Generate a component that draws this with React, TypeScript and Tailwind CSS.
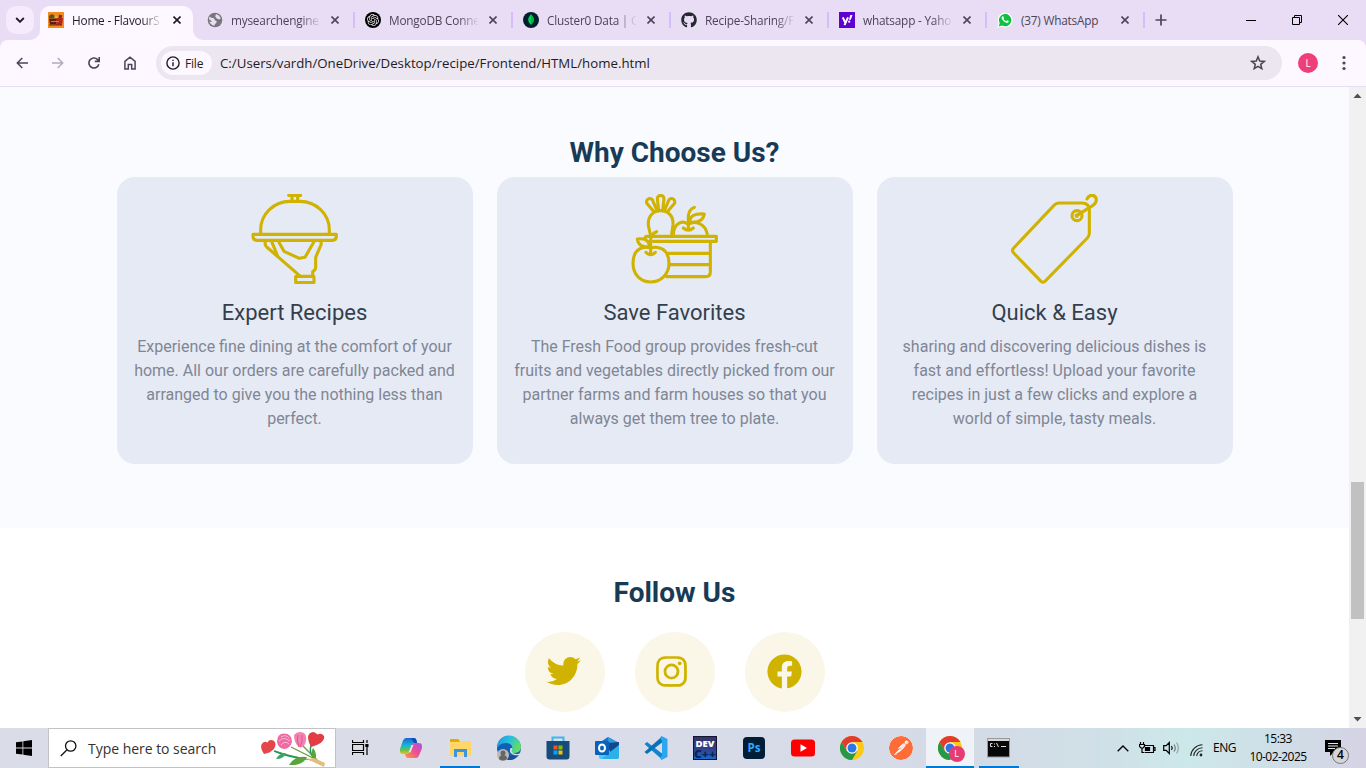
import React from "react";
import { FaGithub } from "react-icons/fa";
import { SiOpenai, SiPostman } from "react-icons/si";
import { BiLogoTwitter, BiLogoInstagram, BiLogoFacebookCircle } from "react-icons/bi";

const ui = "font-['Open_Sans','Noto_Sans',sans-serif]";

function FoodFavicon() {
  return (
    <svg width="16" height="16" viewBox="0 0 16 16">
      <rect width="16" height="16" fill="#f58a1f" />
      <path d="M1 4q2-3 5-1l1 3H1z" fill="#4c5a1c" />
      <path d="M1 6.500h8l-1 6H2z" fill="#5a1e12" />
      <path d="M9 6h6l-1 7H8z" fill="#b3261e" />
      <path d="M11 2.500l3.500 1-1 2.500h-3z" fill="#7a2d18" />
      <path d="M3 9h8v1H3z" fill="#e8703a" />
      <path d="M6.500 4.500h3V6h-3z" fill="#e8c13a" />
      <path d="M1 12.500h13v1H1z" fill="#6b2a12" />
    </svg>
  );
}

function GlobeFavicon() {
  return (
    <svg width="16" height="16" viewBox="0 0 16 16">
      <circle cx="8" cy="8" r="7.300" fill="#77777b" />
      <path d="M2.500 4.600C4 6.500 7 5.500 7.500 7.500c.3 1.500 2.500 1 2.200 2.600-.2 1.200-2 1.400-2.200 3.600-2.500-.2-4.500-2-5.200-4.200L5 10 3.500 8 2 7.500zM9 2l3 1.500 1.800 2.700-1.600 1.300-2.400-1-1.600-2z" fill="#e9ddf5" />
    </svg>
  );
}

function OpenAiFavicon() {
  return (
    <div className="flex h-4 w-4 items-center justify-center rounded-full bg-black">
      <SiOpenai size={12} color="#e8e8e8" />
    </div>
  );
}

function MongoFavicon() {
  return (
    <svg width="16" height="16" viewBox="0 0 16 16">
      <circle cx="8" cy="8" r="8" fill="#001e2b" />
      <path d="M8 2.300C6.500 4 5.100 5.800 5.200 8c.1 2 1.200 3.300 2.500 4.300L8 14l.3-1.700C9.700 11.300 10.800 10 10.900 8 11 5.800 9.500 4 8 2.300z" fill="#00d65b" />
      <path d="M8 2.300V14l.3-1.700C9.700 11.300 10.800 10 10.900 8 11 5.800 9.500 4 8 2.300z" fill="#00b545" />
    </svg>
  );
}

function YahooFavicon() {
  return (
    <svg width="16" height="16" viewBox="0 0 16 16">
      <rect width="16" height="16" fill="#5f01d1" />
      <path d="M3.800 5.400l2.300 5M9 5.400L5.500 13.200" stroke="#fff" strokeWidth="2" fill="none" />
      <path d="M11.300 3h2.200l-1.700 4.800H9.900z" fill="#fff" />
      <circle cx="10.200" cy="9.700" r="1.100" fill="#fff" />
    </svg>
  );
}

function WhatsAppFavicon() {
  return (
    <svg width="16" height="16" viewBox="0 0 16 16">
      <path d="M.4 15.700l1.100-4.400A7.400 7.400 0 1 1 4.700 14.600z" fill="#fff" />
      <path d="M1.800 14.400l.9-3.300a6.200 6.200 0 1 1 2.400 2.400z" fill="#0fc143" />
      <path d="M5.500 4.300c.6-.3 1 0 1.600 1.700-.2.600-.8.700-.4 1.200.6 1 1.400 1.600 2.300 1.900.4 0 .7-1 1.100-.9l1.600.8c.2.900-.6 1.800-1.700 1.900C7.500 10.700 4.900 8 4.600 6.100c0-.8.500-1.600.9-1.800z" fill="#fff" />
    </svg>
  );
}

const tabs = [
  { title: "mysearchengine.", icon: <GlobeFavicon />, fade: true },
  { title: "MongoDB Conne", icon: <OpenAiFavicon />, fade: true },
  { title: "Cluster0 Data | C", icon: <MongoFavicon />, fade: true },
  { title: "Recipe-Sharing/F", icon: <FaGithub size={16} color="#24292f" />, fade: true },
  { title: "whatsapp - Yaho", icon: <YahooFavicon />, fade: true },
  { title: "(37) WhatsApp", icon: <WhatsAppFavicon />, fade: false },
];

const fadeMask = "[mask-image:linear-gradient(to_right,black_70px,transparent_90px)]";

function Cross({ color }: { color: string }) {
  return (
    <svg width="8" height="8" viewBox="0 0 8 8" className="shrink-0">
      <path d="M.5.5l7 7M7.500.5l-7 7" stroke={color} strokeWidth="1.600" />
    </svg>
  );
}

function TabStrip() {
  return (
    <div className="flex h-10 items-stretch bg-[#e9ddf5]">
      <div className="flex w-10 items-start pl-1.5 pt-1.5">
        <div className="flex h-7 w-7 items-center justify-center rounded-[10px] bg-[#f6ebfd]">
          <svg width="10" height="6" viewBox="0 0 10 6"><path d="M1.200 1L5 4.800 8.800 1" fill="none" stroke="#1f1b24" strokeWidth="1.900" /></svg>
        </div>
      </div>
      <div className="relative mt-1.5 flex w-[153px] items-center rounded-t-[10px] bg-[#fdf7ff] pb-1.5 pl-2">
        <svg width="10" height="10" className="absolute -left-2.5 bottom-0"><path d="M10 0v10H0A10 10 0 0 0 10 0z" fill="#fdf7ff" /></svg>
        <svg width="10" height="10" className="absolute -right-2.5 bottom-0"><path d="M0 0v10h10A10 10 0 0 1 0 0z" fill="#fdf7ff" /></svg>
        <FoodFavicon />
        <div className={`ml-2 w-[89px] whitespace-nowrap pt-0.5 text-[11.8px] tracking-[-0.2px] text-[#1f1b24] ${fadeMask}`}>Home - FlavourS</div>
        <div className="ml-3"><Cross color="#1f1b24" /></div>
      </div>
      <div className="flex pl-[14px]">
        {tabs.map((t) => (
          <div key={t.title} className="flex w-[158px] items-center">
            {t.icon}
            <div className={`ml-2 w-[90px] whitespace-nowrap pt-0.5 text-[11.8px] tracking-[-0.2px] text-[#4b4556] ${t.fade ? fadeMask : ""}`}>{t.title}</div>
            <div className="ml-2.5"><Cross color="#4b4556" /></div>
            <div className="ml-[14px] h-4 w-0.5 bg-[#d3bdfb]" />
          </div>
        ))}
      </div>
      <svg width="12" height="12" className="my-auto"><path d="M6 .5v11M.5 6h11" stroke="#4b4556" strokeWidth="1.700" /></svg>
      <div className="ml-auto flex items-center gap-9 pr-[18px]">
        <svg width="10" height="10"><path d="M0 5.500h10" stroke="#000" /></svg>
        <svg width="10" height="10" fill="none" stroke="#000"><path d="M.5 2.500h7v7h-7zM2.500 2.500v-2h7v7h-2" /></svg>
        <svg width="10" height="10"><path d="M0 0l10 10M10 0L0 10" stroke="#000" strokeWidth="1.100" /></svg>
      </div>
    </div>
  );
}

function Toolbar() {
  return (
    <div className="bg-[#e9ddf5]">
      <div className="flex h-[47px] items-center rounded-t-[8px] border-b border-[#e8def0] bg-[#fdf7ff] pl-4">
        <div className="flex w-[122px] items-center gap-6">
          <svg width="12" height="12" fill="none" stroke="#4b4556" strokeWidth="1.500"><path d="M12 6H1.500M6.300 1L1.300 6l5 5" /></svg>
          <svg width="12" height="12" fill="none" stroke="#b2abba" strokeWidth="1.500"><path d="M0 6h10.500M5.700 1l5 5-5 5" /></svg>
          <svg width="12" height="12" fill="none" stroke="#4b4556" strokeWidth="1.600"><path d="M10.800 7.200A5 5 0 1 1 9.600 2.600L11 4M11.200 0v4.400H6.800" /></svg>
          <svg width="12" height="14" fill="none" stroke="#4b4556" strokeWidth="1.500"><path d="M.9 5.400L6 1.200l5.100 4.200V13H7.700V8.500H4.300V13H.9z" /></svg>
        </div>
        <div className="ml-[18px] flex h-[34px] w-[1126px] items-center rounded-full bg-[#ece6f0] pl-[5px]">
          <div className="flex h-6 w-[51px] items-center rounded-full bg-[#fdf7ff] pl-[5px]">
            <svg width="14" height="14" fill="none" stroke="#1f1b24" strokeWidth="1.400"><circle cx="7" cy="7" r="6.100" /><path d="M7 6.200v4M7 3.700v1.400" /></svg>
            <span className="ml-[5px] pt-px text-[12px] font-medium tracking-[-0.2px] text-[#1f1b24]">File</span>
          </div>
          <span className="ml-2 whitespace-nowrap pt-0.5 text-[13.27px] text-[#1f1b24]">C:/Users/vardh/OneDrive/Desktop/recipe/Frontend/HTML/home.html</span>
          <svg width="16" height="16" viewBox="0 0 16 16" className="ml-auto mr-4"><path d="M8 1.800l1.700 4.300 4.500.3-3.500 2.900 1.100 4.400L8 11.300l-3.800 2.400 1.100-4.400-3.500-2.900 4.500-.3z" fill="none" stroke="#4b4556" strokeWidth="1.500" /></svg>
        </div>
        <div className="ml-4 flex h-5 w-5 items-center justify-center rounded-full bg-[#ee3f78] text-[10px] text-white">L</div>
        <svg width="4" height="16" className="ml-6" fill="#4b4556"><circle cx="2" cy="2.500" r="1.600" /><circle cx="2" cy="8" r="1.600" /><circle cx="2" cy="13.500" r="1.600" /></svg>
      </div>
    </div>
  );
}

function LineArt({ children }: { children: React.ReactNode }) {
  return (
    <svg width="90" height="90" viewBox="60 42 270 270" fill="none" stroke="#d0b200" strokeWidth="9.300" strokeLinecap="round" strokeLinejoin="round">{children}</svg>
  );
}

const ServingTray = (
  <LineArt>
    <path d="M176 46H212M186 50v12M203 50v12" />
    <path d="M92 160V150C92 102 132 64 180 64h30C258 64 298 102 298 150V160" />
    <path d="M69 163H319v6q0 12-12 12H81q-12 0-12-12z" />
    <path d="M106 187c-2 6 0 10 4 14L208 286" />
    <path d="M126 187L143 228M147 187L162 214 208 235 225 232 251 187" />
    <path d="M273 187q2 6-2 12L257 232v31q-1 8-9 12v11" />
    <rect x="197" y="289" width="55" height="19" rx="1" />
  </LineArt>
);

const FruitCrate = (
  <LineArt>
    <path d="M146 92L142 56a10 10 0 0 1 20 0L158 92M132 95L112 72a9 9 0 0 1 15-13L141 92M172 95L192 72a9 9 0 0 0-15-13L163 92" />
    <path d="M121 163L115 136C113 108 130 92 152 92S191 108 189 134L185 162" />
    <path d="M190 163C192 126 220 120 235 133 254 120 286 130 292 163" />
    <path d="M220 144q15 13 30 0M235 150V108q2-20 18-26M239 126C240 108 252 100 283 102 280 122 265 129 239 126z" />
    <path d="M122 169H319v15H130M118 169h-7q-6 0-6 7" />
    <path d="M301 187V276q0 14-14 14H170M174 220H299M180 254H299" />
    <path d="M122 204C104 198 69 202 69 250 69 284 92 306 122 306S177 284 177 250C177 202 140 198 122 204z" />
    <path d="M108 217q14 14 28 0M122 222V178q2-18 18-23M116 201C96 202 84 196 82 177 106 174 117 182 118 196" />
  </LineArt>
);

const PriceTag = (
  <LineArt>
    <path d="M207 69H276Q298 69 298 92V160Q298 168 292 174L167 302Q159 311 151 302L71 219Q64 212 71 204L192 76Q198 69 207 69z" />
    <circle cx="261" cy="107" r="15" />
    <path d="M261 106L309 76C324 66 321 46 305 46q-10 0-14 11" />
    <circle cx="260" cy="107" r="2" />
  </LineArt>
);

const features = [
  { title: "Expert Recipes", icon: ServingTray, lines: ["Experience fine dining at the comfort of your", "home. All our orders are carefully packed and", "arranged to give you the nothing less than", "perfect."] },
  { title: "Save Favorites", icon: FruitCrate, lines: ["The Fresh Food group provides fresh-cut", "fruits and vegetables directly picked from our", "partner farms and farm houses so that you", "always get them tree to plate."] },
  { title: "Quick & Easy", icon: PriceTag, lines: ["sharing and discovering delicious dishes is", "fast and effortless! Upload your favorite", "recipes in just a few clicks and explore a", "world of simple, tasty meals."] },
];

const socials = [
  { name: "twitter", icon: <BiLogoTwitter size={42} />, pad: "pr-0.5 pb-0.5" },
  { name: "instagram", icon: <BiLogoInstagram size={41} />, pad: "pr-1.5 pb-0.5" },
  { name: "facebook", icon: <BiLogoFacebookCircle size={41} />, pad: "pr-px pb-px" },
];

function Page() {
  return (
    <main className="flex-1 overflow-hidden bg-white font-[Roboto,sans-serif]">
      <section className="h-[441px] bg-[#fafbff] pt-[46px]">
        <h2 className="text-center text-[28px] font-bold leading-10 text-[#173b56]">Why Choose Us?</h2>
        <div className="ml-[117px] mt-1 flex gap-6">
          {features.map((f) => (
            <div key={f.title} className="flex h-[287px] w-[356px] flex-col items-center rounded-[18px] bg-[#e6eaf5] pt-[17px]">
              {f.icon}
              <h3 className="mt-[13px] pr-px text-[22px] leading-8 text-[#343f4b]">{f.title}</h3>
              <div className="mt-1.5 pr-px text-center text-base leading-6 text-[#7f8694]">
                {f.lines.map((l) => <div key={l} className="whitespace-nowrap">{l}</div>)}
              </div>
            </div>
          ))}
        </div>
      </section>
      <section className="pt-[45px]">
        <h2 className="text-center text-[28px] font-bold leading-10 text-[#173b56]">Follow Us</h2>
        <div className="mt-[19px] flex justify-center gap-[30px]">
          {socials.map((s) => (
            <div key={s.name} className={`flex h-20 w-20 items-center justify-center rounded-full bg-[#faf7e8] text-[#d0b200] ${s.pad}`}>{s.icon}</div>
          ))}
        </div>
      </section>
    </main>
  );
}

function Scrollbar() {
  return (
    <div className="flex w-[17px] flex-col items-center bg-[#f1f1f1]">
      <svg width="17" height="17"><path d="M4.500 11L8.500 6.500l4 4.500z" fill="#505050" /></svg>
      <div className="mt-[378px] h-[137px] w-[13px] bg-[#c1c1c1]" />
      <svg width="17" height="17" className="mt-auto"><path d="M4.500 6L8.500 10.500l4-4.500z" fill="#505050" /></svg>
    </div>
  );
}

function Bouquet() {
  return (
    <svg width="66" height="36" viewBox="0 0 66 36" fill="none">
      <path d="M14 20q20 7 44 10M30 16l28 14M40 13l16 16" stroke="#6a9a32" strokeWidth="1.300" />
      <path d="M13 20q14 6 32 8" stroke="#169b62" strokeWidth="1.600" />
      <path d="M50 14q-2 8 2 12" stroke="#169b62" strokeWidth="1.400" />
      <path d="M15 28q3-6 10-6-2 6-10 6z" fill="#3aa760" />
      <path d="M28 34q6-10 18-8-4 9-18 8zM54 30q-6-6-2-13 5 5 2 13z" fill="#58a63a" />
      <path d="M46 28l7-1 11 5-1 4z" fill="#e3bd7d" />
      <path d="M3 23Q-1 18 .5 13.500q2-4 6-2Q8 8 12.500 9.500q4 3 0 9Q9 22 3 23z" fill="#e4474b" />
      <path d="M50 16Q45 7 48.500 2.500q4-3.500 8 1 4-2 6.500 1.500 2 7-13 11z" fill="#e23d45" />
      <path d="M16 11q0-8.500 7-8.500 8 0 8 8.500-2 7-8 7-6-1-7-7z" fill="#ee6ca3" />
      <path d="M20 6q5-3 8 1M18 10q5-5 11 0M20 14q4-5 8-1" stroke="#ffb8d4" strokeWidth="1" />
      <path d="M33 4q4-5 10-2 3 2 2 8-2 8-7 6-5-4-5-12z" fill="#f283b0" />
      <path d="M37 4q-2 6 1 12M41 4q1 7-2 12" stroke="#e0508f" strokeWidth="1" />
    </svg>
  );
}

function Copilot() {
  return (
    <svg width="24" height="24" viewBox="0 0 24 24">
      <defs>
        <linearGradient id="cpA" x1="0" y1="0" x2="0" y2="1"><stop offset="0" stopColor="#1b62d8" /><stop offset=".45" stopColor="#18b4d8" /><stop offset=".75" stopColor="#62c152" /><stop offset="1" stopColor="#f4c20d" /></linearGradient>
        <linearGradient id="cpB" x1="1" y1="0" x2="0" y2="1"><stop offset="0" stopColor="#a852e8" /><stop offset=".5" stopColor="#ee4f8d" /><stop offset="1" stopColor="#ff9b3d" /></linearGradient>
      </defs>
      <path d="M7 2h8q2 0 2.700 3L18 7h-2q-2 0-3 3l-2 6q-.8 2-3 2H4c-3 0-3.500-3-2.700-6L4 4.500Q5 2 7 2z" fill="url(#cpA)" />
      <path d="M17 22H9q-2 0-2.500-2.500L6 18h2q2 0 3-3l2-6q.8-2 3-2h4c3 0 3.500 3 2.700 6L20 19.500q-1 2.500-3 2.500z" fill="url(#cpB)" />
      <path d="M12 2h3q2 0 2.700 3L18 7h-3z" fill="#1748b4" />
      <path d="M12.500 9h2l-3 7.500h-2z" fill="#e6e2ef" />
    </svg>
  );
}

function Folder() {
  return (
    <svg width="24" height="24" viewBox="0 0 24 24">
      <path d="M2 3h8l2 2h10v15H2z" fill="#e9a900" />
      <path d="M2 6h9l1-1h11v15H2z" fill="#ffd668" />
      <path d="M6 21v-8h13v8h-3v-5H9v5z" fill="#3d93dc" />
    </svg>
  );
}

function Edge() {
  return (
    <svg width="26" height="26" viewBox="0 0 26 26">
      <defs>
        <linearGradient id="edA" x1="0" y1="0" x2="1" y2=".4"><stop offset="0" stopColor="#1c91d9" /><stop offset=".5" stopColor="#24bde0" /><stop offset="1" stopColor="#62dc68" /></linearGradient>
      </defs>
      <circle cx="13" cy="13" r="12" fill="#1260b5" />
      <path d="M1 13A12 12 0 0 1 25 12c0 5-4 6-8 6-2 0-3-2-1.500-3.500C18 11 14 8 10 8c-5 0-8 3-9 5z" fill="url(#edA)" />
      <path d="M10 13c-1 6 5 10 12.500 7-2 3-5 5-9.500 5-5-2-7-9-3-12z" fill="#164f9a" />
      <path d="M15 13c2 0 1 2 .5 3 0 2 4 4 8 2.500 1.500-.5 2 0 1 1-4 2-11 0-10.500-4 .3-1.500 0-2.500 1-2.500z" fill="#d9dce8" />
      <circle cx="7" cy="20" r="6" fill="#bab8b5" /><circle cx="7" cy="18" r="2.500" fill="#656565" /><path d="M3 24q0-4 4-4t4 4q-4 3-8 0z" fill="#656565" />
    </svg>
  );
}

function Store() {
  return (
    <svg width="24" height="26" viewBox="0 0 24 26">
      <path d="M6.500 8V2.500h11V8" fill="none" stroke="#39b9ee" strokeWidth="2" />
      <path d="M.5 6h23v15.500q0 3-3 3h-17q-3 0-3-3z" fill="#174b79" />
      <path d="M7.500 10.500h4v4h-4z" fill="#f35325" /><path d="M12.500 10.500h4v4h-4z" fill="#81bc06" /><path d="M7.500 15.500h4v4h-4z" fill="#05a6f0" /><path d="M12.500 15.500h4v4h-4z" fill="#ffba08" />
    </svg>
  );
}

function Outlook() {
  return (
    <svg width="26" height="26" viewBox="0 0 26 26">
      <path d="M5 8l9-6 11 6v6H5z" fill="#1473c8" />
      <path d="M14 2l11 6-12 8z" fill="#2f9be0" />
      <path d="M25 8v14q0 2-2 2H7q-2 0-2-2v-4z" fill="#4cc5ef" />
      <path d="M25 9L8 24h15q2 0 2-2z" fill="#2bb0e8" />
      <path d="M13 8l12-1v3l-9 7z" fill="#12498e" />
      <rect x="1" y="6" width="14" height="14" rx="1" fill="#0763b9" />
      <ellipse cx="8" cy="13" rx="3" ry="3.500" fill="none" stroke="#fff" strokeWidth="2" />
    </svg>
  );
}

function VsCode() {
  return (
    <svg width="26" height="26" viewBox="0 0 26 26">
      <path d="M1.500 9l2.500-2L19 18.500v6z" fill="#1183cc" />
      <path d="M1.500 17L4 19 19 7.500v-6z" fill="#0871b8" />
      <path d="M18.500 1l6 3v18l-6 3-1.500-2 2-3V6l-2-3z" fill="#2ba7ef" />
    </svg>
  );
}

function DevCpp() {
  return (
    <svg width="24" height="24" viewBox="0 0 24 24">
      <defs><linearGradient id="dvA" x1="0" y1="0" x2="0" y2="1"><stop offset="0" stopColor="#303466" /><stop offset=".5" stopColor="#343c87" /><stop offset="1" stopColor="#176bd0" /></linearGradient></defs>
      <rect x=".5" y=".5" width="23" height="23" fill="url(#dvA)" stroke="#14142c" />
      <text x="12" y="11" textAnchor="middle" fontSize="9.500" fontWeight="800" fill="#fff" fontFamily="Open Sans" textLength="19" lengthAdjust="spacingAndGlyphs">DEV</text>
      <text x="12" y="22" textAnchor="middle" fontSize="11" fontWeight="800" fill="#0a2450" fontFamily="Open Sans" textLength="22" lengthAdjust="spacingAndGlyphs">C++</text>
    </svg>
  );
}

function Photoshop() {
  return (
    <svg width="22" height="22" viewBox="0 0 22 22">
      <rect width="22" height="22" rx="4" fill="#001e36" />
      <text x="11" y="15" textAnchor="middle" fontSize="12" fontWeight="700" fill="#31a8ff" fontFamily="Open Sans" textLength="13" lengthAdjust="spacingAndGlyphs">Ps</text>
    </svg>
  );
}

function YouTube() {
  return <svg width="24" height="18" viewBox="0 0 24 18"><rect y=".5" width="24" height="17" rx="3.500" fill="#f00" /><path d="M9.500 5.300v7.400L16 9z" fill="#fff" /></svg>;
}

function Chrome() {
  return (
    <svg width="24" height="24" viewBox="0 0 24 24">
      <circle cx="12" cy="12" r="12" fill="#fbc916" />
      <path d="M1.600 6A12 12 0 0 1 22.400 6H12L6.800 15z" fill="#e33b2e" />
      <path d="M1.600 6A12 12 0 0 0 12 24l5.200-9H6.800z" fill="#279847" />
      <circle cx="12" cy="12" r="5.800" fill="#fff" /><circle cx="12" cy="12" r="4.500" fill="#2a78e8" />
    </svg>
  );
}

function ChromeProfile() {
  return (
    <div className="relative h-6 w-6">
      <Chrome />
      <div className="absolute left-[11px] top-2.5 flex h-4 w-4 items-center justify-center rounded-full bg-[#e93b73] text-[9px] text-white">L</div>
    </div>
  );
}

function Terminal() {
  return (
    <svg width="24" height="20" viewBox="0 0 24 20">
      <rect x=".5" y=".5" width="22" height="18.500" fill="#080808" stroke="#9a9a9a" />
      <path d="M1 1h21v2H1z" fill="#d6d6d6" />
      <path d="M5.500 5.500h-2v3h2M7.500 5.500v1M7.500 8v1M9.500 5l2 4M14 8.500h5" fill="none" stroke="#ddd" />
    </svg>
  );
}

const apps = [
  { id: "copilot", icon: <Copilot />, state: "" },
  { id: "files", icon: <Folder />, state: "open" },
  { id: "edge", icon: <Edge />, state: "" },
  { id: "store", icon: <Store />, state: "" },
  { id: "outlook", icon: <Outlook />, state: "" },
  { id: "code", icon: <VsCode />, state: "" },
  { id: "devcpp", icon: <DevCpp />, state: "" },
  { id: "photoshop", icon: <Photoshop />, state: "" },
  { id: "youtube", icon: <YouTube />, state: "" },
  { id: "chrome", icon: <Chrome />, state: "" },
  { id: "postman", icon: <SiPostman size={24} color="#ff6c37" className="rounded-full bg-white" />, state: "" },
  { id: "profile", icon: <ChromeProfile />, state: "active" },
  { id: "terminal", icon: <Terminal />, state: "open" },
];

function Taskbar() {
  return (
    <div className="flex h-10 items-stretch bg-[linear-gradient(to_right,#dadce8_0%,#dadce9_45%,#d3dbe6_72%,#d0dfe7_80%,#cce8ea_87%,#cfdde6_94%,#d6d3e4_100%)]">
      <div className="flex w-12 items-center justify-center">
        <svg width="16" height="16" viewBox="0 0 16 16"><path d="M0 2.300l6.500-.9v6.200H0zM7.300 1.300L16 0v7.600H7.300zM0 8.400h6.500v6.200L0 13.700zM7.300 8.400H16V16l-8.700-1.200z" /></svg>
      </div>
      <div className="flex w-72 items-center border border-[#c3c3c6] bg-white pl-[11px]">
        <svg width="17" height="17" viewBox="0 0 17 17" fill="none" stroke="#111" strokeWidth="1.300"><circle cx="10.700" cy="6" r="5.200" /><path d="M7 9.800L.8 16" /></svg>
        <span className="ml-[11px] whitespace-nowrap pt-px text-[14px] tracking-[-0.03px] text-[#333]">Type here to search</span>
        <div className="ml-auto mr-2 pt-0.5"><Bouquet /></div>
      </div>
      <div className="flex w-[50px] items-center justify-center pr-0.5">
        <svg width="17" height="16" fill="none" stroke="#000" strokeWidth="1.200"><path d="M.5 0V2.500h11V0M.5 4.500h11v6H.5zM.5 15v-2.500h11V15M15 0v3M15 7v8" /><path d="M13.300 4h3.200v3h-3.200z" fill="#000" stroke="none" /></svg>
      </div>
      <div className="flex">
        {apps.map((a) => (
          <div key={a.id} className="relative flex w-[49px] items-center justify-center">
            {a.state === "active" && <div className="absolute inset-y-0 left-px w-12 bg-[#eff2f7]" />}
            <div className="relative">{a.icon}</div>
            {a.state !== "" && <div className={`absolute bottom-0 h-0.5 bg-[#0078d7] ${a.state === "active" ? "left-px w-12" : "left-[5px] w-10"}`} />}
          </div>
        ))}
      </div>
      <div className="ml-auto flex items-center">
        <svg width="12" height="7" fill="none" stroke="#000" strokeWidth="1.300"><path d="M.7 6.300L6 1l5.300 5.300" /></svg>
        <svg width="17" height="12" className="ml-2.5" fill="none" stroke="#000" strokeWidth="1.200"><path d="M5 3.500h9.500v7h-9M14.500 5.500H16v3h-1.500M1.500 0v2.500M4.500 0v2.500M.5 2.500h5v2L4 6H2L.5 4.500zM3 6v4.500h2" /><path d="M6.500 5.500h4v3h-4z" fill="#000" /></svg>
        <svg width="17" height="14" className="ml-[7px]" fill="none" stroke="#000" strokeWidth="1.200"><path d="M.7 4.700h2.500L6.300 1.500v11L3.200 9.300H.7zM8.500 5q1.500 2 0 4" /><path d="M11 3.500q2.500 3.500 0 7" stroke="#6b7b80" /><path d="M13.500 1.500q3.700 5.500 0 11" stroke="#93a5a9" /></svg>
        <svg width="13" height="13" className="ml-2.5 mt-1" fill="none" stroke="#222" strokeWidth="1.100"><path d="M.7 12A12 12 0 0 1 12.500.7M3.700 12A9 9 0 0 1 12.500 3.700M6.700 12A6 6 0 0 1 12.500 6.700" /><circle cx="11" cy="11" r="1.400" fill="#222" stroke="none" /></svg>
        <span className="ml-2.5 w-6 whitespace-nowrap text-[12px] tracking-[-0.5px] text-black">ENG</span>
        <div className="ml-[11px] w-[60px] whitespace-nowrap text-center text-[12px] leading-[18px] tracking-[-0.55px] text-black">
          <div>15:33</div>
          <div>10-02-2025</div>
        </div>
        <div className="relative ml-[17px] mr-6 h-[17px] w-[17px]">
          <svg width="17" height="17"><path d="M0 0h16v12H9l-4 4v-4H0z" /><path d="M3 3.500h10M3 6h10M3 8.500h7" stroke="#dce8ee" strokeWidth="1.100" /></svg>
          <div className="absolute left-[7px] top-[7px] flex h-[17px] w-[17px] items-center justify-center rounded-full border border-[#777] bg-[#d5d5da] text-[12px] font-semibold text-black">4</div>
        </div>
      </div>
    </div>
  );
}

export default function App() {
  return (
    <div className={`flex h-[768px] w-[1366px] flex-col overflow-hidden ${ui}`}>
      <TabStrip />
      <Toolbar />
      <div className="flex h-[641px]">
        <Page />
        <Scrollbar />
      </div>
      <Taskbar />
    </div>
  );
}
